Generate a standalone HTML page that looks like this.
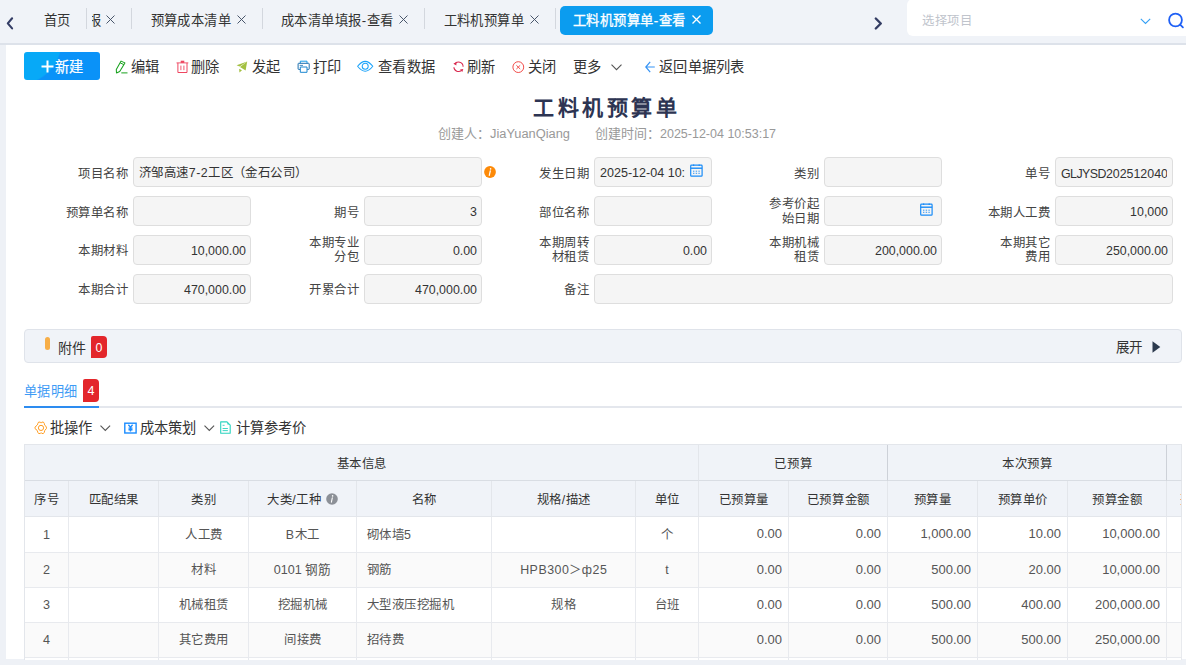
<!DOCTYPE html>
<html lang="zh-CN">
<head>
<meta charset="utf-8">
<style>
*{box-sizing:border-box;margin:0;padding:0}
html,body{width:1186px;height:665px;overflow:hidden}
body{background:#eef1f6;font-family:"Liberation Sans",sans-serif;font-size:14px;color:#303133;position:relative}
.a{position:absolute;white-space:nowrap}
svg{position:absolute;overflow:visible}
#tabbar{position:absolute;left:0;top:0;width:1186px;height:45px;background:#f0f3f8;border-bottom:2px solid #dde2ea}
.tab{position:absolute;top:0;height:42px;line-height:42px;white-space:nowrap;color:#333;font-size:13.3px;letter-spacing:0.45px}
.sep{position:absolute;top:8px;width:1px;height:21px;background:#d3d7de}
#panel{position:absolute;left:6px;top:45px;width:1180px;height:614px;background:#fff}
.tb{position:absolute;top:57px;height:20px;line-height:20px;font-size:14.25px;color:#333;white-space:nowrap;letter-spacing:0.3px}
.lbl{position:absolute;text-align:right;font-size:12.4px;letter-spacing:0.5px;color:#444;white-space:nowrap;line-height:14.5px}
.inp{position:absolute;height:30px;background:#f5f5f5;border:1px solid #dedede;border-radius:4px;font-size:12.4px;color:#333;line-height:30px;padding:0 5px;white-space:nowrap;overflow:hidden}
.r{text-align:right;padding-right:4px}
.th{position:absolute;background:#f0f3f8;border-right:1px solid #e3e6eb;border-bottom:1px solid #e3e6eb;font-size:12.4px;letter-spacing:0.6px;text-indent:0.6px;color:#333;text-align:center;white-space:nowrap}
.td{position:absolute;border-right:1px solid #e8eaee;border-bottom:1px solid #e8eaee;font-size:12.6px;color:#555;white-space:nowrap;padding:0 7px}
</style>
</head>
<body>

<div id="tabbar">
<svg style="left:6px;top:16.5px" width="8" height="13" viewBox="0 0 8 13"><path d="M6.1 1.3 L1.8 6.4 L6.1 11.4" fill="none" stroke="#343d66" stroke-width="2.1" stroke-linecap="round" stroke-linejoin="round"/></svg>
<div class="tab" style="left:44px">首页</div>
<div class="sep" style="left:86px"></div>
<div class="tab" style="left:92px;width:10px;overflow:hidden"><span style="margin-left:-4px">报</span></div>
<svg style="left:106px;top:15px" width="9" height="9" viewBox="0 0 9 9"><path d="M0.5 0.5 L8.5 8.5 M8.5 0.5 L0.5 8.5" stroke="#3f4d63" stroke-width="0.95"/></svg>
<div class="sep" style="left:131px"></div>
<div class="tab" style="left:150.5px">预算成本清单</div>
<svg style="left:236.5px;top:15px" width="9" height="9" viewBox="0 0 9 9"><path d="M0.5 0.5 L8.5 8.5 M8.5 0.5 L0.5 8.5" stroke="#3f4d63" stroke-width="0.95"/></svg>
<div class="sep" style="left:262px"></div>
<div class="tab" style="left:281px">成本清单填报-查看</div>
<svg style="left:399px;top:15px" width="9" height="9" viewBox="0 0 9 9"><path d="M0.5 0.5 L8.5 8.5 M8.5 0.5 L0.5 8.5" stroke="#3f4d63" stroke-width="0.95"/></svg>
<div class="sep" style="left:424px"></div>
<div class="tab" style="left:443.5px">工料机预算单</div>
<svg style="left:529.5px;top:15px" width="9" height="9" viewBox="0 0 9 9"><path d="M0.5 0.5 L8.5 8.5 M8.5 0.5 L0.5 8.5" stroke="#3f4d63" stroke-width="0.95"/></svg>
<div class="sep" style="left:555px"></div>
<div class="a" style="left:560px;top:6px;width:153px;height:29px;background:#0b9cef;border-radius:5px"></div>
<div class="tab" style="left:573px;color:#fff;font-size:13.3px;-webkit-text-stroke:0.3px #fff">工料机预算单-查看</div>
<svg style="left:692px;top:15px" width="9" height="9" viewBox="0 0 9 9"><path d="M0.5 0.5 L8.5 8.5 M8.5 0.5 L0.5 8.5" stroke="#fff" stroke-width="1.3"/></svg>
<svg style="left:874px;top:16.5px" width="9" height="13" viewBox="0 0 9 13"><path d="M1.8 1.5 L6.8 6.5 L1.8 11.5" fill="none" stroke="#343d63" stroke-width="2.4" stroke-linecap="round" stroke-linejoin="round"/></svg>
<div class="a" style="left:907px;top:-1px;width:300px;height:37px;background:#fff;border-radius:6px"></div>
<div class="a" style="left:922px;top:10.5px;line-height:20px;font-size:12.4px;letter-spacing:0.5px;color:#c0c4cc">选择项目</div>
<svg style="left:1139.5px;top:18px" width="11" height="7" viewBox="0 0 11 7"><path d="M0.8 0.8 L5.5 5.5 L10.2 0.8" fill="none" stroke="#35a0f5" stroke-width="1.1"/></svg>
<svg style="left:1166.5px;top:12.5px" width="22" height="17" viewBox="0 0 22 17"><circle cx="8.5" cy="7" r="6.4" fill="none" stroke="#1f60f5" stroke-width="1.8"/><path d="M13.2 11.7 L15.9 14.3" stroke="#1f60f5" stroke-width="1.8" stroke-linecap="round"/></svg>
</div>
<div id="panel"></div>
<div class="a" style="left:24px;top:52px;width:76px;height:28px;border-radius:3px;background:radial-gradient(circle at -7px -12px,#07a9f7 0,#07a9f7 44px,#0a92f8 45.5px)"></div>
<svg style="left:41px;top:59.5px" width="13" height="13" viewBox="0 0 13 13"><path d="M6.5 0.5 V12.5 M0.5 6.5 H12.5" stroke="#fff" stroke-width="2"/></svg>
<div class="tb" style="left:54.5px;top:56.5px;color:#fff;-webkit-text-stroke:0.2px #fff">新建</div>
<svg style="left:115px;top:59.5px" width="13" height="14" viewBox="0 0 13 14"><path d="M6.1 1.1 L9.9 2.9 L4.7 11.4 L1.5 12.9 L1.3 9.5 Z" fill="none" stroke="#17a21d" stroke-width="1.05" stroke-linejoin="round"/><path d="M5.2 2.9 L8.9 4.6" stroke="#17a21d" stroke-width="1"/><path d="M6.3 12.9 H12.5" stroke="#17a21d" stroke-width="1"/></svg>
<div class="tb" style="left:131px">编辑</div>
<svg style="left:175.5px;top:59.5px" width="13" height="14" viewBox="0 0 13 14"><path d="M0.5 2.9 H12.3" stroke="#ee4660" stroke-width="0.9"/><path d="M4.7 0.7 H8.3 V2.9 H4.7 Z" fill="#ee4660"/><path d="M1.9 2.9 V12.5 H11 V2.9" fill="none" stroke="#ee4660" stroke-width="1"/><path d="M4.9 5.6 V10.2 M7.9 5.6 V10.2" stroke="#ee4660" stroke-width="0.9"/></svg>
<div class="tb" style="left:191px">删除</div>
<svg style="left:236px;top:61px" width="12" height="12" viewBox="0 0 12 12"><path d="M11.2 0.5 L0.6 4.3 L3.6 5.4 Z" fill="#a3c041"/><path d="M11.2 0.5 L4 6 L9.6 9.6 Z" fill="#a3c041"/><path d="M3.2 7.8 L3.4 11.5 L6 9.3 Z" fill="#a3c041"/></svg>
<div class="tb" style="left:252px">发起</div>
<svg style="left:296.5px;top:60px" width="13" height="13" viewBox="0 0 13 13"><path d="M3.3 3.2 V1.2 H10 V3.2" fill="none" stroke="#169be8" stroke-width="1"/><path d="M3.1 9.4 H1.6 Q1.1 9.4 1.1 8.9 V3.8 Q1.1 3.3 1.6 3.3 H11.7 Q12.2 3.3 12.2 3.8 V8.9 Q12.2 9.4 11.7 9.4 H10.2" fill="none" stroke="#1c6fae" stroke-width="1"/><path d="M2.7 5.4 H6" stroke="#1c6fae" stroke-width="0.8"/><path d="M3.3 7 H10 V12.3 H3.3 Z" fill="none" stroke="#1a86d0" stroke-width="1"/></svg>
<div class="tb" style="left:312.5px">打印</div>
<svg style="left:356.5px;top:60.5px" width="17" height="11" viewBox="0 0 17 11"><path d="M0.6 5.3 Q8.2 -4.6 15.8 5.3 Q8.2 15.2 0.6 5.3 Z" fill="none" stroke="#1ca3fa" stroke-width="1.05" stroke-linejoin="round"/><circle cx="8.2" cy="5.3" r="3" fill="none" stroke="#1ca3fa" stroke-width="1.05"/></svg>
<div class="tb" style="left:378px">查看数据</div>
<svg style="left:452.5px;top:61px" width="11" height="11" viewBox="0 0 11 11"><path d="M1.6 3.2 A4.6 4.6 0 0 1 10.1 5.7" fill="none" stroke="#d9284e" stroke-width="1.05"/><path d="M0.9 6.2 A4.6 4.6 0 0 0 8.6 9.3" fill="none" stroke="#d9284e" stroke-width="1.05"/><path d="M0.4 2.4 L3.6 1.3 L3.3 4.4 Z" fill="#d9284e"/><path d="M7 8.4 L10.3 8 L9.3 10.9 Z" fill="#d9284e"/></svg>
<div class="tb" style="left:467px">刷新</div>
<svg style="left:512px;top:60.5px" width="13" height="13" viewBox="0 0 13 13"><circle cx="6.3" cy="6.1" r="5.4" fill="none" stroke="#f0423f" stroke-width="0.95"/><path d="M4.4 4.3 L8.2 8 M8.2 4.3 L4.4 8" stroke="#f0423f" stroke-width="0.95"/></svg>
<div class="tb" style="left:527.5px">关闭</div>
<div class="tb" style="left:572.5px">更多</div>
<svg style="left:610.5px;top:64px" width="11" height="7" viewBox="0 0 11 7"><path d="M0.5 0.6 L5.5 5.6 L10.5 0.6" fill="none" stroke="#555" stroke-width="1.1"/></svg>
<svg style="left:645px;top:60.5px" width="10" height="12" viewBox="0 0 10 12"><path d="M5.2 0.8 L0.8 6 L5.2 11.2 M0.9 6 H9.8" fill="none" stroke="#3593f5" stroke-width="1.2"/></svg>
<div class="tb" style="left:659px">返回单据列表</div>
<div class="a" style="left:533px;top:94.5px;line-height:26px;font-size:21px;font-weight:bold;letter-spacing:3.6px;color:#2d3452">工料机预算单</div>
<div class="a" style="left:438px;top:126.3px;line-height:16px;font-size:13px;color:#999">创建人：<span style="font-size:12.85px">JiaYuanQiang</span></div>
<div class="a" style="left:595px;top:126.3px;line-height:16px;font-size:13px;color:#999">创建时间：<span style="font-size:12.5px">2025-12-04 10:53:17</span></div>
<div class="lbl" style="left:8px;width:120px;top:158.5px;line-height:30px">项目名称</div>
<div class="inp" style="left:133px;top:157px;width:349px;letter-spacing:0.45px">济邹高速7-2工区（金石公司）</div>
<svg style="left:484.4px;top:166.1px" width="12" height="12" viewBox="0 0 12 12"><circle cx="6" cy="6" r="5.9" fill="#fd8a08"/><circle cx="6.6" cy="2.9" r="0.8" fill="#fff"/><path d="M6.3 4.8 L5.3 9.3" stroke="#fff" stroke-width="1.2" stroke-linecap="round"/></svg>
<div class="lbl" style="left:469px;width:120px;top:158.5px;line-height:30px">发生日期</div>
<div class="inp" style="left:594px;top:157px;width:118px;font-size:12.55px">2025-12-04 10:</div>
<svg style="left:689.6px;top:164.2px" width="13" height="13" viewBox="0 0 13 13"><rect x="0.7" y="1.2" width="11.4" height="11" rx="0.8" fill="none" stroke="#1a8cf7" stroke-width="1.2"/><path d="M0.7 4.2 H12.1" stroke="#1a8cf7" stroke-width="1.4"/><path d="M3.6 0.5 V2 M9.2 0.5 V2" stroke="#1a8cf7" stroke-width="1.2"/><path d="M3 7.2 H4.4 M5.7 7.2 H7.1 M8.4 7.2 H9.8 M3 9.3 H4.4 M5.7 9.3 H7.1 M8.4 9.3 H9.8" stroke="#1a8cf7" stroke-width="0.9"/></svg>
<div class="lbl" style="left:699px;width:120px;top:158.5px;line-height:30px">类别</div>
<div class="inp" style="left:824px;top:157px;width:118px;"></div>
<div class="lbl" style="left:930px;width:120px;top:158.5px;line-height:30px">单号</div>
<div class="inp" style="left:1055px;top:157px;width:118px;"><div style="width:106px;overflow:hidden;padding-top:0.7px"><span style="letter-spacing:-0.55px">GLJYSD</span>202512040</div></div>
<div class="lbl" style="left:8px;width:120px;top:197.5px;line-height:30px">预算单名称</div>
<div class="inp" style="left:133px;top:196px;width:118px;"></div>
<div class="lbl" style="left:239px;width:120px;top:197.5px;line-height:30px">期号</div>
<div class="inp r" style="left:364px;top:196px;width:118px;">3</div>
<div class="lbl" style="left:469px;width:120px;top:197.5px;line-height:30px">部位名称</div>
<div class="inp" style="left:594px;top:196px;width:118px;"></div>
<div class="lbl" style="left:699px;width:120px;top:197px;line-height:14.8px">参考价起<br>始日期</div>
<div class="inp" style="left:824px;top:196px;width:118px;"></div>
<svg style="left:920px;top:203px" width="13" height="13" viewBox="0 0 13 13"><rect x="0.7" y="1.2" width="11.4" height="11" rx="0.8" fill="none" stroke="#1a8cf7" stroke-width="1.2"/><path d="M0.7 4.2 H12.1" stroke="#1a8cf7" stroke-width="1.4"/><path d="M3.6 0.5 V2 M9.2 0.5 V2" stroke="#1a8cf7" stroke-width="1.2"/><path d="M3 7.2 H4.4 M5.7 7.2 H7.1 M8.4 7.2 H9.8 M3 9.3 H4.4 M5.7 9.3 H7.1 M8.4 9.3 H9.8" stroke="#1a8cf7" stroke-width="0.9"/></svg>
<div class="lbl" style="left:930px;width:120px;top:197.5px;line-height:30px">本期人工费</div>
<div class="inp r" style="left:1055px;top:196px;width:118px;">10,000</div>
<div class="lbl" style="left:8px;width:120px;top:236.0px;line-height:30px">本期材料</div>
<div class="inp r" style="left:133px;top:234.5px;width:118px;">10,000.00</div>
<div class="lbl" style="left:239px;width:120px;top:235.5px;line-height:14.8px">本期专业<br>分包</div>
<div class="inp r" style="left:364px;top:234.5px;width:118px;">0.00</div>
<div class="lbl" style="left:469px;width:120px;top:235.5px;line-height:14.8px">本期周转<br>材租赁</div>
<div class="inp r" style="left:594px;top:234.5px;width:118px;">0.00</div>
<div class="lbl" style="left:699px;width:120px;top:235.5px;line-height:14.8px">本期机械<br>租赁</div>
<div class="inp r" style="left:824px;top:234.5px;width:118px;">200,000.00</div>
<div class="lbl" style="left:930px;width:120px;top:235.5px;line-height:14.8px">本期其它<br>费用</div>
<div class="inp r" style="left:1055px;top:234.5px;width:118px;">250,000.00</div>
<div class="lbl" style="left:8px;width:120px;top:275.0px;line-height:30px">本期合计</div>
<div class="inp r" style="left:133px;top:273.5px;width:118px;">470,000.00</div>
<div class="lbl" style="left:239px;width:120px;top:275.0px;line-height:30px">开累合计</div>
<div class="inp r" style="left:364px;top:273.5px;width:118px;">470,000.00</div>
<div class="lbl" style="left:469px;width:120px;top:275.0px;line-height:30px">备注</div>
<div class="inp" style="left:594px;top:273.5px;width:579px;"></div>
<div class="a" style="left:24px;top:329px;width:1158px;height:34px;background:#f0f3f8;border:1px solid #dfe3ea;border-radius:4px"></div>
<div class="a" style="left:45px;top:337px;width:5px;height:13px;border-radius:3px;background:#f7ae48"></div>
<div class="a" style="left:57.5px;top:338px;line-height:20px;font-size:14px;color:#333">附件</div>
<div class="a" style="left:91px;top:336px;width:16px;height:22px;background:#e3262b;border-radius:2px 4px 4px 0;color:#fff;font-size:12.4px;line-height:25px;text-align:center">0</div>
<div class="a" style="left:1115.5px;top:337.5px;line-height:20px;font-size:13.5px;color:#333">展开</div>
<svg style="left:1151.5px;top:340.5px" width="9" height="12" viewBox="0 0 9 12"><path d="M0.5 0.3 L8.3 6 L0.5 11.7 Z" fill="#2c3a4e"/></svg>
<div class="a" style="left:24px;top:381.5px;line-height:20px;font-size:13.15px;letter-spacing:0.4px;color:#3e9bf5">单据明细</div>
<div class="a" style="left:83px;top:379px;width:16px;height:23px;background:#e3262b;border-radius:2px 4px 4px 0;color:#fff;font-size:12.6px;line-height:24px;text-align:center">4</div>
<div class="a" style="left:24px;top:406px;width:1158px;height:2px;background:#e4e7ed"></div>
<div class="a" style="left:24px;top:406px;width:75px;height:2px;background:#2d8cf0"></div>
<svg style="left:33.5px;top:421px" width="14" height="14" viewBox="0 0 14 14"><path d="M4.6 1.1 H6.3 L6.8 1.8 H7.4 L7.9 1.1 H9.4 L10.3 2.5 L10.6 3.9 L11 4.3 L12.4 6.1 L12.4 7.6 L11 9.2 L10.6 9.8 L10.3 11.3 L9.4 12.5 H7.9 L7.4 11.8 H6.8 L6.3 12.5 H4.6 L3.8 11.3 L3.4 9.8 L3 9.2 L1 7.6 L1 6.1 L3 4.3 L3.4 3.9 L3.8 2.5 Z" fill="none" stroke="#ff9c1f" stroke-width="1" stroke-linejoin="round"/><circle cx="7" cy="6.9" r="2.6" fill="none" stroke="#ff9c1f" stroke-width="1"/></svg>
<div class="a" style="left:50px;top:418px;line-height:21px;font-size:14.25px;color:#333">批操作</div>
<svg style="left:99.5px;top:425px" width="11" height="7" viewBox="0 0 11 7"><path d="M0.5 0.6 L5.3 5.4 L10.1 0.6" fill="none" stroke="#555" stroke-width="1.1"/></svg>
<svg style="left:124px;top:421.5px" width="13" height="12" viewBox="0 0 13 12"><rect x="0.8" y="1.2" width="11.3" height="9.8" fill="none" stroke="#1a8cff" stroke-width="1.4"/><path d="M4.4 2.8 L6.5 5.2 L8.6 2.8 M6.5 5.2 V9.4 M4.5 6.1 H8.5 M4.5 7.7 H8.5" fill="none" stroke="#1a8cff" stroke-width="1.35"/></svg>
<div class="a" style="left:140px;top:418px;line-height:21px;font-size:14.25px;color:#333">成本策划</div>
<svg style="left:203.5px;top:425px" width="11" height="7" viewBox="0 0 11 7"><path d="M0.5 0.6 L5.3 5.4 L10.1 0.6" fill="none" stroke="#555" stroke-width="1.1"/></svg>
<svg style="left:220px;top:421px" width="12" height="14" viewBox="0 0 12 14"><path d="M0.7 0.9 H7 L10.2 4.1 V12.3 H0.7 Z" fill="none" stroke="#2bd3bf" stroke-width="1.1" stroke-linejoin="round"/><path d="M7.4 1.6 L9.4 3.6 H7.4 Z" fill="#2bd3bf"/><path d="M2.6 4.3 H4.6 M2.6 7.5 H7.9 M2.6 9.6 H7.9" stroke="#2bd3bf" stroke-width="0.9"/></svg>
<div class="a" style="left:235.5px;top:418px;line-height:21px;font-size:14.25px;color:#333">计算参考价</div>
<div class="a" style="left:24px;top:444px;width:1158px;height:216px;background:#e3e6eb"></div>
<div class="th" style="left:25px;top:445px;width:674px;height:36px;line-height:38px;border-bottom-color:#d9dde3">基本信息</div>
<div class="th" style="left:699px;top:445px;width:189px;height:36px;line-height:38px;border-right-color:#cdd1d8;border-bottom-color:#d9dde3">已预算</div>
<div class="th" style="left:888px;top:445px;width:279px;height:36px;line-height:38px;border-right-color:#cdd1d8;border-bottom-color:#d9dde3">本次预算</div>
<div class="th" style="left:1167px;top:445px;width:15px;height:36px;line-height:38px;border-bottom-color:#d9dde3"></div>
<div class="th" style="left:25px;top:481px;width:44px;height:36px;line-height:38px;">序号</div>
<div class="th" style="left:69px;top:481px;width:90px;height:36px;line-height:38px;">匹配结果</div>
<div class="th" style="left:159px;top:481px;width:90px;height:36px;line-height:38px;">类别</div>
<div class="th" style="left:249px;top:481px;width:108px;height:36px;line-height:38px;">大类/工种<span style="display:inline-block;width:17px"></span></div>
<div class="th" style="left:357px;top:481px;width:135px;height:36px;line-height:38px;">名称</div>
<div class="th" style="left:492px;top:481px;width:144px;height:36px;line-height:38px;">规格/描述</div>
<div class="th" style="left:636px;top:481px;width:63px;height:36px;line-height:38px;">单位</div>
<div class="th" style="left:699px;top:481px;width:90px;height:36px;line-height:38px;">已预算量</div>
<div class="th" style="left:789px;top:481px;width:99px;height:36px;line-height:38px;">已预算金额</div>
<div class="th" style="left:888px;top:481px;width:90px;height:36px;line-height:38px;">预算量</div>
<div class="th" style="left:978px;top:481px;width:90px;height:36px;line-height:38px;">预算单价</div>
<div class="th" style="left:1068px;top:481px;width:99px;height:36px;line-height:38px;">预算金额</div>
<div class="th" style="left:1167px;top:481px;width:15px;height:36px;line-height:38px;"></div>
<svg style="left:325.8px;top:492.8px" width="12" height="12" viewBox="0 0 12 12"><circle cx="6" cy="6" r="5.8" fill="#8c9097"/><circle cx="6.6" cy="2.9" r="0.8" fill="#fff"/><path d="M6.3 4.8 L5.4 9.2" stroke="#fff" stroke-width="1.1" stroke-linecap="round"/></svg>
<div class="td" style="left:25px;top:517px;width:44px;height:36px;line-height:36px;text-align:center;background:#fff;">1</div>
<div class="td" style="left:69px;top:517px;width:90px;height:36px;line-height:36px;text-align:center;background:#fff;"></div>
<div class="td" style="left:159px;top:517px;width:90px;height:36px;line-height:36px;text-align:center;background:#fff;font-size:12.4px;letter-spacing:0.5px;text-indent:0.5px;">人工费</div>
<div class="td" style="left:249px;top:517px;width:108px;height:36px;line-height:36px;text-align:center;background:#fff;font-size:12.4px;letter-spacing:0.5px;text-indent:0.5px;">B木工</div>
<div class="td" style="left:357px;top:517px;width:135px;height:36px;line-height:36px;text-align:left;background:#fff;font-size:12.4px;letter-spacing:0.5px;text-indent:0.5px;padding-left:9px;">砌体墙5</div>
<div class="td" style="left:492px;top:517px;width:144px;height:36px;line-height:36px;text-align:center;background:#fff;"></div>
<div class="td" style="left:636px;top:517px;width:63px;height:36px;line-height:36px;text-align:center;background:#fff;font-size:12.4px;letter-spacing:0.5px;text-indent:0.5px;">个</div>
<div class="td" style="left:699px;top:517px;width:90px;height:36px;line-height:36px;text-align:right;background:#fff;font-size:13px;padding-right:6px;line-height:34px;">0.00</div>
<div class="td" style="left:789px;top:517px;width:99px;height:36px;line-height:36px;text-align:right;background:#fff;font-size:13px;padding-right:6px;line-height:34px;">0.00</div>
<div class="td" style="left:888px;top:517px;width:90px;height:36px;line-height:36px;text-align:right;background:#fff;font-size:13px;padding-right:6px;line-height:34px;">1,000.00</div>
<div class="td" style="left:978px;top:517px;width:90px;height:36px;line-height:36px;text-align:right;background:#fff;font-size:13px;padding-right:6px;line-height:34px;">10.00</div>
<div class="td" style="left:1068px;top:517px;width:99px;height:36px;line-height:36px;text-align:right;background:#fff;font-size:13px;padding-right:6px;line-height:34px;">10,000.00</div>
<div class="td" style="left:1167px;top:517px;width:15px;height:36px;line-height:36px;text-align:center;background:#fff;"></div>
<div class="td" style="left:25px;top:553px;width:44px;height:35px;line-height:35px;text-align:center;background:#fafafa;">2</div>
<div class="td" style="left:69px;top:553px;width:90px;height:35px;line-height:35px;text-align:center;background:#fafafa;"></div>
<div class="td" style="left:159px;top:553px;width:90px;height:35px;line-height:35px;text-align:center;background:#fafafa;font-size:12.4px;letter-spacing:0.5px;text-indent:0.5px;">材料</div>
<div class="td" style="left:249px;top:553px;width:108px;height:35px;line-height:35px;text-align:center;background:#fafafa;">0101 钢筋</div>
<div class="td" style="left:357px;top:553px;width:135px;height:35px;line-height:35px;text-align:left;background:#fafafa;font-size:12.4px;letter-spacing:0.5px;text-indent:0.5px;padding-left:9px;">钢筋</div>
<div class="td" style="left:492px;top:553px;width:144px;height:35px;line-height:35px;text-align:center;background:#fafafa;font-size:12.4px;letter-spacing:0.5px;text-indent:0.5px;">HPB300＞ф25</div>
<div class="td" style="left:636px;top:553px;width:63px;height:35px;line-height:35px;text-align:center;background:#fafafa;font-size:12.4px;letter-spacing:0.5px;text-indent:0.5px;">t</div>
<div class="td" style="left:699px;top:553px;width:90px;height:35px;line-height:35px;text-align:right;background:#fafafa;font-size:13px;padding-right:6px;line-height:33px;">0.00</div>
<div class="td" style="left:789px;top:553px;width:99px;height:35px;line-height:35px;text-align:right;background:#fafafa;font-size:13px;padding-right:6px;line-height:33px;">0.00</div>
<div class="td" style="left:888px;top:553px;width:90px;height:35px;line-height:35px;text-align:right;background:#fafafa;font-size:13px;padding-right:6px;line-height:33px;">500.00</div>
<div class="td" style="left:978px;top:553px;width:90px;height:35px;line-height:35px;text-align:right;background:#fafafa;font-size:13px;padding-right:6px;line-height:33px;">20.00</div>
<div class="td" style="left:1068px;top:553px;width:99px;height:35px;line-height:35px;text-align:right;background:#fafafa;font-size:13px;padding-right:6px;line-height:33px;">10,000.00</div>
<div class="td" style="left:1167px;top:553px;width:15px;height:35px;line-height:35px;text-align:center;background:#fafafa;"></div>
<div class="td" style="left:25px;top:588px;width:44px;height:35px;line-height:35px;text-align:center;background:#fff;">3</div>
<div class="td" style="left:69px;top:588px;width:90px;height:35px;line-height:35px;text-align:center;background:#fff;"></div>
<div class="td" style="left:159px;top:588px;width:90px;height:35px;line-height:35px;text-align:center;background:#fff;font-size:12.4px;letter-spacing:0.5px;text-indent:0.5px;">机械租赁</div>
<div class="td" style="left:249px;top:588px;width:108px;height:35px;line-height:35px;text-align:center;background:#fff;font-size:12.4px;letter-spacing:0.5px;text-indent:0.5px;">挖掘机械</div>
<div class="td" style="left:357px;top:588px;width:135px;height:35px;line-height:35px;text-align:left;background:#fff;font-size:12.4px;letter-spacing:0.5px;text-indent:0.5px;padding-left:9px;">大型液压挖掘机</div>
<div class="td" style="left:492px;top:588px;width:144px;height:35px;line-height:35px;text-align:center;background:#fff;font-size:12.4px;letter-spacing:0.5px;text-indent:0.5px;">规格</div>
<div class="td" style="left:636px;top:588px;width:63px;height:35px;line-height:35px;text-align:center;background:#fff;font-size:12.4px;letter-spacing:0.5px;text-indent:0.5px;">台班</div>
<div class="td" style="left:699px;top:588px;width:90px;height:35px;line-height:35px;text-align:right;background:#fff;font-size:13px;padding-right:6px;line-height:33px;">0.00</div>
<div class="td" style="left:789px;top:588px;width:99px;height:35px;line-height:35px;text-align:right;background:#fff;font-size:13px;padding-right:6px;line-height:33px;">0.00</div>
<div class="td" style="left:888px;top:588px;width:90px;height:35px;line-height:35px;text-align:right;background:#fff;font-size:13px;padding-right:6px;line-height:33px;">500.00</div>
<div class="td" style="left:978px;top:588px;width:90px;height:35px;line-height:35px;text-align:right;background:#fff;font-size:13px;padding-right:6px;line-height:33px;">400.00</div>
<div class="td" style="left:1068px;top:588px;width:99px;height:35px;line-height:35px;text-align:right;background:#fff;font-size:13px;padding-right:6px;line-height:33px;">200,000.00</div>
<div class="td" style="left:1167px;top:588px;width:15px;height:35px;line-height:35px;text-align:center;background:#fff;"></div>
<div class="td" style="left:25px;top:623px;width:44px;height:35px;line-height:35px;text-align:center;background:#fafafa;">4</div>
<div class="td" style="left:69px;top:623px;width:90px;height:35px;line-height:35px;text-align:center;background:#fafafa;"></div>
<div class="td" style="left:159px;top:623px;width:90px;height:35px;line-height:35px;text-align:center;background:#fafafa;font-size:12.4px;letter-spacing:0.5px;text-indent:0.5px;">其它费用</div>
<div class="td" style="left:249px;top:623px;width:108px;height:35px;line-height:35px;text-align:center;background:#fafafa;font-size:12.4px;letter-spacing:0.5px;text-indent:0.5px;">间接费</div>
<div class="td" style="left:357px;top:623px;width:135px;height:35px;line-height:35px;text-align:left;background:#fafafa;font-size:12.4px;letter-spacing:0.5px;text-indent:0.5px;padding-left:9px;">招待费</div>
<div class="td" style="left:492px;top:623px;width:144px;height:35px;line-height:35px;text-align:center;background:#fafafa;"></div>
<div class="td" style="left:636px;top:623px;width:63px;height:35px;line-height:35px;text-align:center;background:#fafafa;"></div>
<div class="td" style="left:699px;top:623px;width:90px;height:35px;line-height:35px;text-align:right;background:#fafafa;font-size:13px;padding-right:6px;line-height:33px;">0.00</div>
<div class="td" style="left:789px;top:623px;width:99px;height:35px;line-height:35px;text-align:right;background:#fafafa;font-size:13px;padding-right:6px;line-height:33px;">0.00</div>
<div class="td" style="left:888px;top:623px;width:90px;height:35px;line-height:35px;text-align:right;background:#fafafa;font-size:13px;padding-right:6px;line-height:33px;">500.00</div>
<div class="td" style="left:978px;top:623px;width:90px;height:35px;line-height:35px;text-align:right;background:#fafafa;font-size:13px;padding-right:6px;line-height:33px;">500.00</div>
<div class="td" style="left:1068px;top:623px;width:99px;height:35px;line-height:35px;text-align:right;background:#fafafa;font-size:13px;padding-right:6px;line-height:33px;">250,000.00</div>
<div class="td" style="left:1167px;top:623px;width:15px;height:35px;line-height:35px;text-align:center;background:#fafafa;"></div>
<div class="td" style="left:25px;top:658px;width:44px;height:35px;line-height:35px;text-align:center;background:#fff;"></div>
<div class="td" style="left:69px;top:658px;width:90px;height:35px;line-height:35px;text-align:center;background:#fff;"></div>
<div class="td" style="left:159px;top:658px;width:90px;height:35px;line-height:35px;text-align:center;background:#fff;"></div>
<div class="td" style="left:249px;top:658px;width:108px;height:35px;line-height:35px;text-align:center;background:#fff;"></div>
<div class="td" style="left:357px;top:658px;width:135px;height:35px;line-height:35px;text-align:left;background:#fff;padding-left:9px;"></div>
<div class="td" style="left:492px;top:658px;width:144px;height:35px;line-height:35px;text-align:center;background:#fff;"></div>
<div class="td" style="left:636px;top:658px;width:63px;height:35px;line-height:35px;text-align:center;background:#fff;"></div>
<div class="td" style="left:699px;top:658px;width:90px;height:35px;line-height:35px;text-align:right;background:#fff;font-size:13px;padding-right:6px;line-height:33px;"></div>
<div class="td" style="left:789px;top:658px;width:99px;height:35px;line-height:35px;text-align:right;background:#fff;font-size:13px;padding-right:6px;line-height:33px;"></div>
<div class="td" style="left:888px;top:658px;width:90px;height:35px;line-height:35px;text-align:right;background:#fff;font-size:13px;padding-right:6px;line-height:33px;"></div>
<div class="td" style="left:978px;top:658px;width:90px;height:35px;line-height:35px;text-align:right;background:#fff;font-size:13px;padding-right:6px;line-height:33px;"></div>
<div class="td" style="left:1068px;top:658px;width:99px;height:35px;line-height:35px;text-align:right;background:#fff;font-size:13px;padding-right:6px;line-height:33px;"></div>
<div class="td" style="left:1167px;top:658px;width:15px;height:35px;line-height:35px;text-align:center;background:#fff;"></div>
<div class="a" style="left:1179.5px;top:493.5px;width:1.5px;height:1.5px;background:#f7c89a"></div><div class="a" style="left:1179.5px;top:498.5px;width:1.5px;height:1.5px;background:#f5b07a"></div><div class="a" style="left:1179.5px;top:503.5px;width:1.5px;height:1.5px;background:#f7c89a"></div>
<div class="a" style="left:0;top:660px;width:1186px;height:5px;background:#eef1f6"></div>
<div class="a" style="left:0;top:45px;width:6px;height:620px;background:#eef1f6"></div>
</body>
</html>
